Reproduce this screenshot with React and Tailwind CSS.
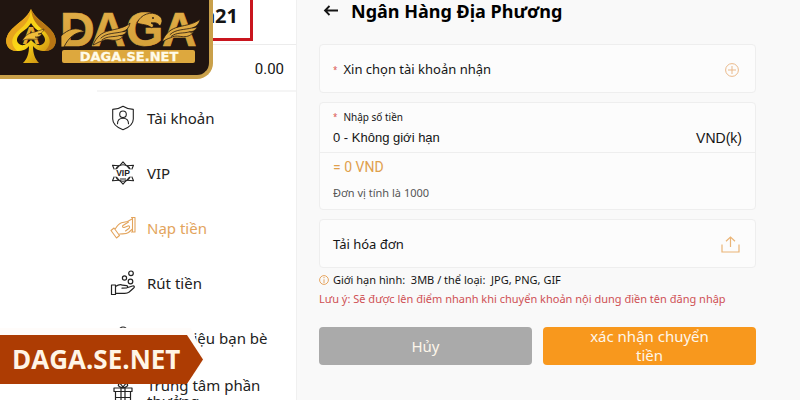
import { useState } from 'react'

function AccountIcon() {
  return (
    <svg viewBox="0 0 26 26" className="size-[26px]" fill="none" stroke="currentColor" strokeWidth="1.1" strokeLinejoin="round">
      <path d="M13 1.2c3 2 6.500 3 10.300 3.200v9.600c0 5-4.300 8.500-10.300 10.800C7 22.500 2.700 19 2.700 14V4.400C6.500 4.200 10 3.200 13 1.200z" />
      <circle cx="13" cy="9.300" r="3.300" />
      <path d="M7.500 18.800c0-3.800 2.200-5.600 5.500-5.600s5.500 1.800 5.500 5.600" strokeLinecap="round" />
    </svg>
  )
}

function VipIcon() {
  return (
    <svg viewBox="0 0 26 26" className="size-[26px]" fill="none" stroke="currentColor" strokeWidth="1.1" strokeLinejoin="round">
      <path d="M9.500 5.800 13 1.800l3.500 4M16.500 20.200 13 24.200l-3.500-4M17 5.800l6.500-.5-2.300 5.500M21.200 15.200l2.300 5.500-6.500-.5M9 20.200l-6.500.5 2.300-5.500M4.800 10.800 2.500 5.300l6.500.5" />
      <circle cx="13" cy="13" r="8.300" />
      <path d="M9 5.800 4.800 10.800M17 5.800l4.200 5M9 20.200l-4.200-5M17 20.200l4.200-5M10 19h6" />
      <rect x="3.500" y="9.300" width="19" height="7.400" fill="white" stroke="none" />
      <text x="13" y="16" textAnchor="middle" fontSize="8.500" fontWeight="bold" fontFamily="Liberation Sans, sans-serif" fill="currentColor" stroke="none">VIP</text>
    </svg>
  )
}

function DepositIcon() {
  return (
    <svg viewBox="0 0 26 26" className="size-[26px]" fill="none" stroke="currentColor" strokeWidth="1.1" strokeLinejoin="round" strokeLinecap="round">
      <path d="M1 15.500 4 13l5.500 7.500-3 2.500zM5 14.300c2-3 3.500-5.500 6.500-6.500l6-1.300 4.500-2.500M9.700 19c3-.4 6.300.3 8.800-1.500l4-3.500" />
      <path d="M18.500 7 13 10.500c-1 1-.3 2.300 1.200 1.900l4.300-1.600c1.500 0 1.500 2 0 3l-3 2.200" />
      <path d="M21.500 2.500h3.500v14.500h-3.500M22.500 2.500v14.500" />
    </svg>
  )
}

function WithdrawIcon() {
  return (
    <svg viewBox="0 0 26 26" className="size-[26px]" fill="none" stroke="currentColor" strokeWidth="1.2" strokeLinejoin="round" strokeLinecap="round">
      <circle cx="21" cy="3.300" r="2.300" />
      <circle cx="14.500" cy="8" r="2.100" />
      <circle cx="20.500" cy="11.500" r="2.300" />
      <path d="M1.500 15h4v9.500h-4zM5.500 16.500c3-2 5-2.500 7-1.300l4 .4c1.500.3 1.500 2.200 0 2.400l-4.500.2M17 17.800l5.500-1.800c1.700-.5 2.500.8 1.200 2l-4.500 4c-1.500 1.200-2.700 1.300-4.500 1.300H5.500" />
    </svg>
  )
}

function FriendsIcon() {
  return (
    <svg viewBox="0 0 26 26" className="size-[26px]" fill="none" stroke="currentColor" strokeWidth="1.2">
      <circle cx="13" cy="6" r="4" />
      <path d="M4 22c0-6 4-9 9-9s9 3 9 9" />
    </svg>
  )
}

function GiftIcon() {
  return (
    <svg viewBox="0 0 26 26" className="size-[26px]" fill="none" stroke="currentColor" strokeWidth="1.2" strokeLinejoin="round">
      <path d="M4 8h18v3.500H4zM5.500 11.500h15v13.500h-15zM11 8v17M15 8v17M5.500 17.500h15" />
      <path d="M13 8C10 7.500 7.500 6 8.500 4.200c1.200-1.700 3.800.8 4.500 3.800.7-3 3.300-5.500 4.500-3.800 1 1.800-1.500 3.300-4.500 3.800z" />
    </svg>
  )
}

const menu = [
  { id: 'account', label: 'Tài khoản', icon: AccountIcon },
  { id: 'vip', label: 'VIP', icon: VipIcon },
  { id: 'deposit', label: 'Nạp tiền', icon: DepositIcon },
  { id: 'withdraw', label: 'Rút tiền', icon: WithdrawIcon },
  { id: 'friends', label: 'Giới thiệu bạn bè', icon: FriendsIcon },
  { id: 'rewards', label: 'Trung tâm phần thưởng', icon: GiftIcon },
]

function Wing({ x, y, scale }) {
  return (
    <g transform={`translate(${x} ${y}) scale(${scale})`} stroke="#211510" strokeWidth=".8">
      <path d="M0 20C4 11 9 7 17 5 25 3 33 2 39-3 38 2 35 5 31 6 34 6 35 5 36 5 34 9 31 10 28 10 31 11 32 10 33 9 30 14 26 15 22 15 18 15 14 13 9 16 5 17 3 19 0 20Z" fill="#dfaa42" />
      <path d="M8 13C14 7 24 8 31 6M9 15C15 10 22 12 28 10" fill="none" />
    </g>
  )
}

function Logo() {
  return (
    <svg viewBox="0 0 205 70" className="h-[70px] w-[205px]" role="img" aria-label="DAGA">
      <defs>
        <linearGradient id="gold" x1="0" y1="0" x2="0" y2="1">
          <stop offset="0" stopColor="#e3b04a" />
          <stop offset="1" stopColor="#d19c35" />
        </linearGradient>
        <linearGradient id="spade" x1="0" y1="0" x2="1" y2="1">
          <stop offset="0" stopColor="#f0b51c" />
          <stop offset=".5" stopColor="#fbd916" />
          <stop offset="1" stopColor="#b76f12" />
        </linearGradient>
      </defs>
      <path d="M31 9C34 17 43 22 50 29 60 39 56 51 45 51 39 51 35 49 33 46 33 54 35 59 39 63H23C27 59 29 54 29 46 27 49 23 51 17 51 6 51 2 39 12 29 19 22 28 17 31 9Z" fill="url(#spade)" />
      <path d="M31 9C28 17 19 22 12 29 2 39 6 51 17 51 9 43 12 36 19 30 25 25 30 20 31 9Z" fill="#e7a51d" />
      <path d="M31 9C34 17 43 22 50 29 60 39 56 51 45 51 53 43 50 36 43 30 37 25 32 20 31 9Z" fill="#b97614" />
      <path d="M31 23C34 29 40 31 43 35 48 41 43 46 38 45 35 44 33 42 31 40 29 42 27 44 24 45 19 46 14 41 19 35 22 31 28 29 31 23Z" fill="#211510" />
      <text x="31" y="44" textAnchor="middle" fontSize="24" fontWeight="bold" fontFamily="Liberation Sans, sans-serif" fill="#e5ac2d">A</text>
      <path d="M22 41C26 34 30 33 35 32L44 29C43 33 40 34 38 34L42 34C40 37 37 37 35 37L39 38C35 41 28 37 22 41Z" fill="#f0bd3a" stroke="#211510" strokeWidth=".5" />
      <g fontSize="48" fontWeight="bold" fontFamily="Liberation Sans, sans-serif" fill="url(#gold)" stroke="#dca640" strokeWidth=".6">
        <text x="60" y="46">D</text>
        <text x="91" y="46">A</text>
        <text x="126" y="46">G</text>
        <text x="162" y="46">A</text>
      </g>
      <path d="M61 36C68 29 77 26 85 32 76 31 68 38 64 47H61Z" fill="#e0aa3d" stroke="#211510" strokeWidth=".8" />
      <Wing x={93} y={26} scale={0.95} />
      <Wing x={162} y={22} scale={0.98} />
      <path d="M137 23C141 14 151 11 158 15 163 18 163 22 160 26 158 23 155 22 151 23 154 24 154 26 152 28 147 24 142 25 137 23Z" fill="#dfaa42" stroke="#211510" strokeWidth=".8" />
      <circle cx="153" cy="18" r=".9" fill="#211510" />
      <rect x="62" y="50" width="133" height="13" rx="2" fill="#dda83e" />
      <text x="129" y="61" textAnchor="middle" fontSize="13" fontWeight="bold" fontFamily="DejaVu Sans, sans-serif" fill="#fffbe9" stroke="#fffbe9" strokeWidth=".3">DAGA.SE.NET</text>
    </svg>
  )
}

function Sidebar({ active, onSelect }) {
  return (
    <aside className="w-[297px] shrink-0 border-r border-[#f0f0f0] bg-white pl-[97px]">
      <div className="flex h-[45px] items-start border-b border-[#ececec]">
        <div className="flex h-[41px] w-[156px] items-start justify-end border-r-3 border-b-3 border-[#c9151e] pt-1 pr-3 text-xl leading-6 font-bold">
          a21
        </div>
      </div>
      <div className="flex h-[47px] items-center justify-end border-b-2 border-[#f5f5f5] pt-1 pr-3 font-['Roboto','Liberation_Sans',sans-serif] text-[15px]">
        0.00
      </div>
      <nav>
        {menu.map(({ id, label, icon: Icon }) => (
          <button
            key={id}
            type="button"
            onClick={() => onSelect(id)}
            className={`flex h-[55px] w-full items-center gap-[11px] pr-6 pb-1 pl-[13px] text-left text-[15px] leading-4 ${active === id ? 'text-[#e3a45c]' : 'text-[#222]'}`}
          >
            <span className="shrink-0"><Icon /></span>
            <span>{label}</span>
          </button>
        ))}
      </nav>
    </aside>
  )
}

export default function App() {
  const [active, setActive] = useState('deposit')
  const [amount, setAmount] = useState('')

  return (
    <div className="relative flex h-screen overflow-hidden bg-[#f9f9f9] font-['Noto_Sans','Open_Sans',sans-serif] text-[#151515]">
      <Sidebar active={active} onSelect={setActive} />

      <main className="min-w-0 flex-1 pr-11 pl-[22px]">
        <header className="flex h-11 items-start gap-3 pl-1">
          <button type="button" aria-label="Quay lại" className="pt-1">
            <svg viewBox="0 0 16 14" className="h-[14px] w-4" fill="none" stroke="currentColor" strokeWidth="1.8">
              <path d="M15 6.500H2M6.500 2 2 6.500 6.500 11" />
            </svg>
          </button>
          <h1 className="text-lg leading-[22px] font-bold text-black">Ngân Hàng Địa Phương</h1>
        </header>

        <form onSubmit={(e) => e.preventDefault()}>
          <button type="button" className="flex h-[49px] w-full items-center justify-between rounded border border-[#eeeeee] bg-[#fcfcfc] pt-[2px] pr-4 pl-[13px] text-[13px]">
            <span className="flex items-center gap-[6px]">
              <span className="text-[8px] text-[#d9534f]">*</span>
              Xin chọn tài khoản nhận
            </span>
            <svg viewBox="0 0 14 14" className="size-[14px]" fill="none" stroke="#eab98a">
              <circle cx="7" cy="7" r="6.400" />
              <path d="M7 3v8M3 7h8" />
            </svg>
          </button>

          <div className="mt-[9px] rounded border border-[#eeeeee] bg-[#fcfcfc]">
            <div className="border-b border-[#eeeeee] px-[13px] pt-[6px] pb-[3px]">
              <label htmlFor="amount" className="flex items-center gap-[6px] text-[10px] leading-4">
                <span className="text-[8px] text-[#d9534f]">*</span>
                Nhập số tiền
              </label>
              <div className="flex h-6 items-center justify-between pt-[2px] font-['Liberation_Sans',sans-serif] text-sm">
                <input
                  id="amount"
                  value={amount}
                  onChange={(e) => setAmount(e.target.value)}
                  placeholder="0 - Không giới hạn"
                  className="min-w-0 flex-1 bg-transparent text-[13px] outline-none placeholder:text-[#151515]"
                />
                <span>VND(k)</span>
              </div>
            </div>
            <div className="h-[56px] px-[13px] pt-1">
              <p className="font-['Roboto',sans-serif] text-sm leading-5 text-[#e0a04c]">= {Number(amount) * 1000 || 0} VND</p>
              <p className="pt-2 text-[11px] leading-4 text-[#555]">Đơn vị tính là 1000</p>
            </div>
          </div>

          <label className="mt-[9px] flex h-[49px] cursor-pointer items-center justify-between rounded border border-[#eeeeee] bg-[#fcfcfc] pt-[2px] pr-[15px] pl-[13px] text-[13px]">
            Tải hóa đơn
            <input type="file" accept="image/*" className="sr-only" />
            <svg viewBox="0 0 19 17" className="h-[17px] w-[19px]" fill="none" stroke="#eab476" strokeWidth="1.2">
              <path d="M1 8.500V16h17V8.500M9.500 11V1M5 5.300 9.500 1 14 5.300" />
            </svg>
          </label>

          <p className="mt-1 flex items-center gap-1 text-[11px] leading-4">
            <svg viewBox="0 0 10 10" className="size-[10px]" fill="none" stroke="#e6a45e">
              <circle cx="5" cy="5" r="4.400" />
              <path d="M5 4.300V8M5 2v1.200" />
            </svg>
            <span className="whitespace-pre">Giới hạn hình:  3MB / thể loại:  JPG, PNG, GIF</span>
          </p>
          <p className="text-[11px] leading-[22px] whitespace-nowrap text-[#cf5054]">
            Lưu ý: Sẽ được lên điểm nhanh khi chuyển khoản nội dung điền tên đăng nhập
          </p>

          <div className="mt-[17px] grid grid-cols-2 gap-[11px] text-[15px] text-[#fdf6ea]">
            <button type="reset" onClick={() => setAmount('')} className="h-[38px] rounded bg-[#aaaaaa]">Hủy</button>
            <button type="submit" className="h-[38px] rounded bg-[#f8981d] px-10 leading-[19px]">xác nhận chuyển tiền</button>
          </div>
        </form>
      </main>

      <div className="absolute top-0 left-0 h-[79px] w-[213px] rounded-br-2xl border-r-4 border-b-4 border-[#c9a04a] bg-[#211510]">
        <Logo />
      </div>

      <div className="absolute bottom-4 left-0 w-[205px] bg-[#fffcfa] pt-[7px] [clip-path:polygon(0_0,191px_0,100%_57%,187px_100%,0_100%)]">
        <a href="#daga" className="flex h-[49px] w-[203px] items-center bg-[#ad3c03] pl-3 font-['Open_Sans',sans-serif] text-[26px] font-bold text-[#fff5e6] [clip-path:polygon(0_0,187px_0,100%_50%,187px_100%,0_100%)]">
          DAGA.SE.NET
        </a>
      </div>
    </div>
  )
}
